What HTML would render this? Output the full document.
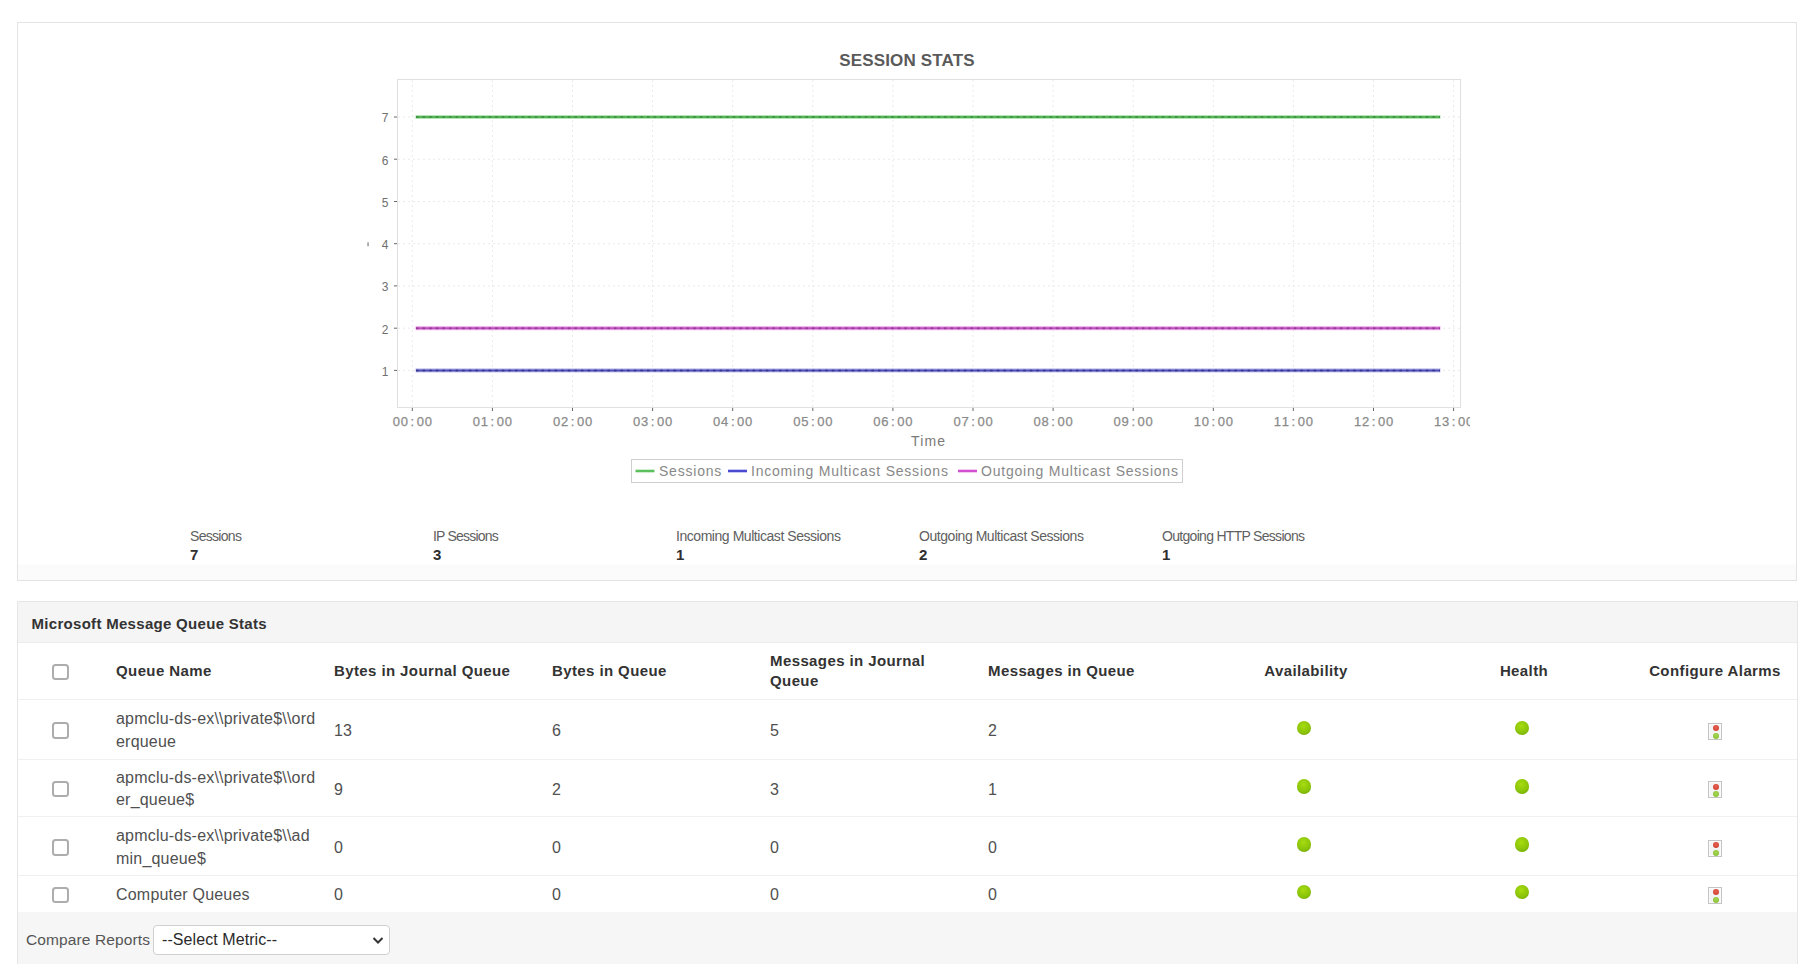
<!DOCTYPE html>
<html><head><meta charset="utf-8">
<style>
*{box-sizing:border-box;margin:0;padding:0}
html,body{width:1812px;height:975px;background:#fff;overflow:hidden;font-family:"Liberation Sans",sans-serif;position:relative}
.abs{position:absolute}
#p1{left:17px;top:22px;width:1780px;height:559px;border:1px solid #e3e3e3;background:linear-gradient(#fff 541px,#fbfbfb 542px)}
#chart{position:absolute;left:0;top:0}
.st{position:absolute;top:526.5px;font-size:14px;color:#606060;letter-spacing:-0.45px;line-height:18px}
.st b{display:block;font-size:15px;color:#2e2e2e;letter-spacing:0;margin-top:1.5px}
#p2{left:17px;top:601px;width:1781px;height:363px;border:1px solid #e6e6e6;background:#fff}
#p2h{position:absolute;left:0;top:0;width:100%;height:41px;background:#f5f5f5;border-bottom:1px solid #ececec}
#p2h span{position:absolute;left:13.5px;top:13px;font-size:15px;font-weight:bold;color:#333;letter-spacing:0.3px;line-height:17px}
.cb{position:absolute;width:16.4px;height:16.4px;border:2px solid #adadad;border-radius:3.5px;background:#fff}
.th{position:absolute;font-size:15px;font-weight:bold;color:#333;line-height:20px;letter-spacing:0.4px}
.td{position:absolute;font-size:16px;color:#505050;line-height:22.5px;letter-spacing:0.2px}
.sep{position:absolute;left:0;width:100%;height:1px;background:#f0f0f0}
.dot{position:absolute;width:14.4px;height:14.4px;border-radius:50%;background:radial-gradient(circle at 45% 35%,#a6dc10 0%,#8cc50a 55%,#6aa000 100%)}
.ico{position:absolute;width:14px;height:17px;border:1px solid #c4c4c4;background:#f3f3f3;box-shadow:inset 0 0 0 1px #fafafa}
.ico:before,.ico:after{content:"";position:absolute;left:3.5px;width:6px;height:6px;border-radius:50%}
.ico:before{top:1.6px;background:radial-gradient(circle at 50% 40%,#e86050,#c8392b)}
.ico:after{top:8.9px;width:6.2px;height:6.2px;left:3.4px;background:radial-gradient(circle at 50% 40%,#a8d850,#7cb82e)}
#foot{position:absolute;left:0;top:310px;width:100%;height:52px;background:#f6f6f6}
#foot span{position:absolute;left:8px;top:19px;font-size:15.5px;color:#555;letter-spacing:0.12px}
#sel{position:absolute;left:135px;top:13px;width:237px;height:30px;border:1px solid #d0d0d0;border-radius:4px;background:#fff;font-size:16px;color:#222}
#sel span{position:absolute;left:8px;top:5px;font-size:16px;color:#2a2a2a;letter-spacing:0.08px}
#sel svg{position:absolute;left:217.5px;top:10px}
</style></head><body>
<div id="p1" class="abs"></div>
<svg id="chart" width="1812" height="500" viewBox="0 0 1812 500">
<defs><clipPath id="cl"><rect x="0" y="0" width="1470" height="500"/></clipPath></defs>
<text x="907" y="66" text-anchor="middle" font-family="Liberation Sans" font-weight="bold" font-size="17" fill="#5a5a5a" letter-spacing="0.15">SESSION STATS</text>
<line x1="412.3" y1="80" x2="412.3" y2="407" stroke="#eaeaea" stroke-width="1" stroke-dasharray="2,3"/>
<line x1="492.4" y1="80" x2="492.4" y2="407" stroke="#eaeaea" stroke-width="1" stroke-dasharray="2,3"/>
<line x1="572.5" y1="80" x2="572.5" y2="407" stroke="#eaeaea" stroke-width="1" stroke-dasharray="2,3"/>
<line x1="652.6" y1="80" x2="652.6" y2="407" stroke="#eaeaea" stroke-width="1" stroke-dasharray="2,3"/>
<line x1="732.7" y1="80" x2="732.7" y2="407" stroke="#eaeaea" stroke-width="1" stroke-dasharray="2,3"/>
<line x1="812.8" y1="80" x2="812.8" y2="407" stroke="#eaeaea" stroke-width="1" stroke-dasharray="2,3"/>
<line x1="892.9" y1="80" x2="892.9" y2="407" stroke="#eaeaea" stroke-width="1" stroke-dasharray="2,3"/>
<line x1="973.0" y1="80" x2="973.0" y2="407" stroke="#eaeaea" stroke-width="1" stroke-dasharray="2,3"/>
<line x1="1053.1" y1="80" x2="1053.1" y2="407" stroke="#eaeaea" stroke-width="1" stroke-dasharray="2,3"/>
<line x1="1133.2" y1="80" x2="1133.2" y2="407" stroke="#eaeaea" stroke-width="1" stroke-dasharray="2,3"/>
<line x1="1213.3" y1="80" x2="1213.3" y2="407" stroke="#eaeaea" stroke-width="1" stroke-dasharray="2,3"/>
<line x1="1293.4" y1="80" x2="1293.4" y2="407" stroke="#eaeaea" stroke-width="1" stroke-dasharray="2,3"/>
<line x1="1373.5" y1="80" x2="1373.5" y2="407" stroke="#eaeaea" stroke-width="1" stroke-dasharray="2,3"/>
<line x1="1453.6" y1="80" x2="1453.6" y2="407" stroke="#eaeaea" stroke-width="1" stroke-dasharray="2,3"/>
<line x1="398" y1="117.0" x2="1460" y2="117.0" stroke="#eaeaea" stroke-width="1" stroke-dasharray="2,3"/>
<line x1="398" y1="159.2" x2="1460" y2="159.2" stroke="#eaeaea" stroke-width="1" stroke-dasharray="2,3"/>
<line x1="398" y1="201.5" x2="1460" y2="201.5" stroke="#eaeaea" stroke-width="1" stroke-dasharray="2,3"/>
<line x1="398" y1="243.7" x2="1460" y2="243.7" stroke="#eaeaea" stroke-width="1" stroke-dasharray="2,3"/>
<line x1="398" y1="285.9" x2="1460" y2="285.9" stroke="#eaeaea" stroke-width="1" stroke-dasharray="2,3"/>
<line x1="398" y1="328.2" x2="1460" y2="328.2" stroke="#eaeaea" stroke-width="1" stroke-dasharray="2,3"/>
<line x1="398" y1="370.4" x2="1460" y2="370.4" stroke="#eaeaea" stroke-width="1" stroke-dasharray="2,3"/>
<rect x="397.5" y="79.5" width="1063" height="328" fill="none" stroke="#e0e0e0" stroke-width="1"/>
<line x1="394" y1="117.0" x2="397" y2="117.0" stroke="#666" stroke-width="1"/>
<text x="388.5" y="122.3" text-anchor="end" font-family="Liberation Sans" font-size="12" fill="#707070">7</text>
<line x1="394" y1="159.2" x2="397" y2="159.2" stroke="#666" stroke-width="1"/>
<text x="388.5" y="164.5" text-anchor="end" font-family="Liberation Sans" font-size="12" fill="#707070">6</text>
<line x1="394" y1="201.5" x2="397" y2="201.5" stroke="#666" stroke-width="1"/>
<text x="388.5" y="206.8" text-anchor="end" font-family="Liberation Sans" font-size="12" fill="#707070">5</text>
<line x1="394" y1="243.7" x2="397" y2="243.7" stroke="#666" stroke-width="1"/>
<text x="388.5" y="249.0" text-anchor="end" font-family="Liberation Sans" font-size="12" fill="#707070">4</text>
<line x1="394" y1="285.9" x2="397" y2="285.9" stroke="#666" stroke-width="1"/>
<text x="388.5" y="291.2" text-anchor="end" font-family="Liberation Sans" font-size="12" fill="#707070">3</text>
<line x1="394" y1="328.2" x2="397" y2="328.2" stroke="#666" stroke-width="1"/>
<text x="388.5" y="333.5" text-anchor="end" font-family="Liberation Sans" font-size="12" fill="#707070">2</text>
<line x1="394" y1="370.4" x2="397" y2="370.4" stroke="#666" stroke-width="1"/>
<text x="388.5" y="375.7" text-anchor="end" font-family="Liberation Sans" font-size="12" fill="#707070">1</text>
<line x1="412.3" y1="408" x2="412.3" y2="411" stroke="#666" stroke-width="1"/>
<text x="396.3 404.3 412.3 420.3 428.3" y="426.3" text-anchor="middle" font-family="Liberation Sans" font-size="13" fill="#8a8a8a" stroke="#8a8a8a" stroke-width="0.25" clip-path="url(#cl)">00:00</text>
<line x1="492.4" y1="408" x2="492.4" y2="411" stroke="#666" stroke-width="1"/>
<text x="476.4 484.4 492.4 500.4 508.4" y="426.3" text-anchor="middle" font-family="Liberation Sans" font-size="13" fill="#8a8a8a" stroke="#8a8a8a" stroke-width="0.25" clip-path="url(#cl)">01:00</text>
<line x1="572.5" y1="408" x2="572.5" y2="411" stroke="#666" stroke-width="1"/>
<text x="556.5 564.5 572.5 580.5 588.5" y="426.3" text-anchor="middle" font-family="Liberation Sans" font-size="13" fill="#8a8a8a" stroke="#8a8a8a" stroke-width="0.25" clip-path="url(#cl)">02:00</text>
<line x1="652.6" y1="408" x2="652.6" y2="411" stroke="#666" stroke-width="1"/>
<text x="636.6 644.6 652.6 660.6 668.6" y="426.3" text-anchor="middle" font-family="Liberation Sans" font-size="13" fill="#8a8a8a" stroke="#8a8a8a" stroke-width="0.25" clip-path="url(#cl)">03:00</text>
<line x1="732.7" y1="408" x2="732.7" y2="411" stroke="#666" stroke-width="1"/>
<text x="716.7 724.7 732.7 740.7 748.7" y="426.3" text-anchor="middle" font-family="Liberation Sans" font-size="13" fill="#8a8a8a" stroke="#8a8a8a" stroke-width="0.25" clip-path="url(#cl)">04:00</text>
<line x1="812.8" y1="408" x2="812.8" y2="411" stroke="#666" stroke-width="1"/>
<text x="796.8 804.8 812.8 820.8 828.8" y="426.3" text-anchor="middle" font-family="Liberation Sans" font-size="13" fill="#8a8a8a" stroke="#8a8a8a" stroke-width="0.25" clip-path="url(#cl)">05:00</text>
<line x1="892.9" y1="408" x2="892.9" y2="411" stroke="#666" stroke-width="1"/>
<text x="876.9 884.9 892.9 900.9 908.9" y="426.3" text-anchor="middle" font-family="Liberation Sans" font-size="13" fill="#8a8a8a" stroke="#8a8a8a" stroke-width="0.25" clip-path="url(#cl)">06:00</text>
<line x1="973.0" y1="408" x2="973.0" y2="411" stroke="#666" stroke-width="1"/>
<text x="957.0 965.0 973.0 981.0 989.0" y="426.3" text-anchor="middle" font-family="Liberation Sans" font-size="13" fill="#8a8a8a" stroke="#8a8a8a" stroke-width="0.25" clip-path="url(#cl)">07:00</text>
<line x1="1053.1" y1="408" x2="1053.1" y2="411" stroke="#666" stroke-width="1"/>
<text x="1037.1 1045.1 1053.1 1061.1 1069.1" y="426.3" text-anchor="middle" font-family="Liberation Sans" font-size="13" fill="#8a8a8a" stroke="#8a8a8a" stroke-width="0.25" clip-path="url(#cl)">08:00</text>
<line x1="1133.2" y1="408" x2="1133.2" y2="411" stroke="#666" stroke-width="1"/>
<text x="1117.2 1125.2 1133.2 1141.2 1149.2" y="426.3" text-anchor="middle" font-family="Liberation Sans" font-size="13" fill="#8a8a8a" stroke="#8a8a8a" stroke-width="0.25" clip-path="url(#cl)">09:00</text>
<line x1="1213.3" y1="408" x2="1213.3" y2="411" stroke="#666" stroke-width="1"/>
<text x="1197.3 1205.3 1213.3 1221.3 1229.3" y="426.3" text-anchor="middle" font-family="Liberation Sans" font-size="13" fill="#8a8a8a" stroke="#8a8a8a" stroke-width="0.25" clip-path="url(#cl)">10:00</text>
<line x1="1293.4" y1="408" x2="1293.4" y2="411" stroke="#666" stroke-width="1"/>
<text x="1277.4 1285.4 1293.4 1301.4 1309.4" y="426.3" text-anchor="middle" font-family="Liberation Sans" font-size="13" fill="#8a8a8a" stroke="#8a8a8a" stroke-width="0.25" clip-path="url(#cl)">11:00</text>
<line x1="1373.5" y1="408" x2="1373.5" y2="411" stroke="#666" stroke-width="1"/>
<text x="1357.5 1365.5 1373.5 1381.5 1389.5" y="426.3" text-anchor="middle" font-family="Liberation Sans" font-size="13" fill="#8a8a8a" stroke="#8a8a8a" stroke-width="0.25" clip-path="url(#cl)">12:00</text>
<line x1="1453.6" y1="408" x2="1453.6" y2="411" stroke="#666" stroke-width="1"/>
<text x="1437.6 1445.6 1453.6 1461.6 1469.6" y="426.3" text-anchor="middle" font-family="Liberation Sans" font-size="13" fill="#8a8a8a" stroke="#8a8a8a" stroke-width="0.25" clip-path="url(#cl)">13:00</text>
<text x="928.6" y="446" text-anchor="middle" font-family="Liberation Sans" font-size="14" fill="#7a7a7a" letter-spacing="1.1">Time</text>
<rect x="367.3" y="242.3" width="1.5" height="4" fill="#999"/>
<line x1="415.5" y1="117.0" x2="1440.5" y2="117.0" stroke="#b4e6b4" stroke-width="4.2"/>
<line x1="416" y1="117.0" x2="1440" y2="117.0" stroke="#56b456" stroke-width="2"/>
<line x1="416" y1="117.0" x2="1440" y2="117.0" stroke="#357f40" stroke-width="2" stroke-dasharray="2.5,4.1" opacity="0.6"/>
<line x1="415.5" y1="328.2" x2="1440.5" y2="328.2" stroke="#f2b4f2" stroke-width="4.2"/>
<line x1="416" y1="328.2" x2="1440" y2="328.2" stroke="#bc50bc" stroke-width="2"/>
<line x1="416" y1="328.2" x2="1440" y2="328.2" stroke="#7a307a" stroke-width="2" stroke-dasharray="2.5,4.1" opacity="0.6"/>
<line x1="415.5" y1="370.4" x2="1440.5" y2="370.4" stroke="#c4c4f2" stroke-width="4.2"/>
<line x1="416" y1="370.4" x2="1440" y2="370.4" stroke="#4c4cb4" stroke-width="2"/>
<line x1="416" y1="370.4" x2="1440" y2="370.4" stroke="#2c2c78" stroke-width="2" stroke-dasharray="2.5,4.1" opacity="0.6"/>
<rect x="631.5" y="459.5" width="551" height="23" fill="#fff" stroke="#cfcfcf" stroke-width="1"/>
<line x1="635.5" y1="471" x2="654.5" y2="471" stroke="#5cc15c" stroke-width="2.6"/>
<text x="659" y="476" font-family="Liberation Sans" font-size="14" fill="#888" letter-spacing="0.78">Sessions</text>
<line x1="728" y1="471" x2="747" y2="471" stroke="#4a4ad0" stroke-width="2.6"/>
<text x="751" y="476" font-family="Liberation Sans" font-size="14" fill="#888" letter-spacing="0.78">Incoming Multicast Sessions</text>
<line x1="958" y1="471" x2="977" y2="471" stroke="#d24fd2" stroke-width="2.6"/>
<text x="981" y="476" font-family="Liberation Sans" font-size="14" fill="#888" letter-spacing="0.78">Outgoing Multicast Sessions</text>
</svg>
<div class="st" style="left:190px;letter-spacing:-0.7px">Sessions<b>7</b></div>
<div class="st" style="left:433px;letter-spacing:-0.8px">IP Sessions<b>3</b></div>
<div class="st" style="left:676px">Incoming Multicast Sessions<b>1</b></div>
<div class="st" style="left:919px">Outgoing Multicast Sessions<b>2</b></div>
<div class="st" style="left:1162px;letter-spacing:-0.7px">Outgoing HTTP Sessions<b>1</b></div>
<div id="p2" class="abs">
<div id="p2h"><span>Microsoft Message Queue Stats</span></div>
<div class="cb" style="left:34.3px;top:61.89999999999998px"></div>
<div class="th" style="left:98px;top:59px">Queue Name</div>
<div class="th" style="left:316px;top:59px">Bytes in Journal Queue</div>
<div class="th" style="left:534px;top:59px">Bytes in Queue</div>
<div class="th" style="left:752px;top:49px">Messages in Journal<br>Queue</div>
<div class="th" style="left:970px;top:59px">Messages in Queue</div>
<div class="th" style="left:1179px;top:59px;width:218px;text-align:center">Availability</div>
<div class="th" style="left:1397px;top:59px;width:218px;text-align:center">Health</div>
<div class="th" style="left:1588px;top:59px;width:218px;text-align:center">Configure Alarms</div>
<div class="sep" style="top:97px"></div>
<div class="cb" style="left:34.4px;top:120.34999999999991px"></div>
<div class="td" style="left:98px;top:106.14999999999998px">apmclu-ds-ex\\private$\\ord<br>erqueue</div>
<div class="td" style="left:316px;top:118.14999999999998px">13</div>
<div class="td" style="left:534px;top:118.14999999999998px">6</div>
<div class="td" style="left:752px;top:118.14999999999998px">5</div>
<div class="td" style="left:970px;top:118.14999999999998px">2</div>
<div class="dot" style="left:1279.1px;top:118.54999999999995px"></div>
<div class="dot" style="left:1497.1px;top:118.54999999999995px"></div>
<div class="ico" style="left:1690.3px;top:120.75px"></div>
<div class="sep" style="top:157px"></div>
<div class="cb" style="left:34.4px;top:178.9999999999999px"></div>
<div class="td" style="left:98px;top:164.79999999999995px">apmclu-ds-ex\\private$\\ord<br>er_queue$</div>
<div class="td" style="left:316px;top:176.79999999999995px">9</div>
<div class="td" style="left:534px;top:176.79999999999995px">2</div>
<div class="td" style="left:752px;top:176.79999999999995px">3</div>
<div class="td" style="left:970px;top:176.79999999999995px">1</div>
<div class="dot" style="left:1279.1px;top:177.19999999999993px"></div>
<div class="dot" style="left:1497.1px;top:177.19999999999993px"></div>
<div class="ico" style="left:1690.3px;top:179.39999999999998px"></div>
<div class="sep" style="top:214px"></div>
<div class="cb" style="left:34.4px;top:237.2499999999999px"></div>
<div class="td" style="left:98px;top:223.04999999999995px">apmclu-ds-ex\\private$\\ad<br>min_queue$</div>
<div class="td" style="left:316px;top:235.04999999999995px">0</div>
<div class="td" style="left:534px;top:235.04999999999995px">0</div>
<div class="td" style="left:752px;top:235.04999999999995px">0</div>
<div class="td" style="left:970px;top:235.04999999999995px">0</div>
<div class="dot" style="left:1279.1px;top:235.44999999999993px"></div>
<div class="dot" style="left:1497.1px;top:235.44999999999993px"></div>
<div class="ico" style="left:1690.3px;top:237.64999999999998px"></div>
<div class="sep" style="top:273px"></div>
<div class="cb" style="left:34.4px;top:284.4999999999999px"></div>
<div class="td" style="left:98px;top:282.29999999999995px">Computer Queues</div>
<div class="td" style="left:316px;top:282.29999999999995px">0</div>
<div class="td" style="left:534px;top:282.29999999999995px">0</div>
<div class="td" style="left:752px;top:282.29999999999995px">0</div>
<div class="td" style="left:970px;top:282.29999999999995px">0</div>
<div class="dot" style="left:1279.1px;top:282.69999999999993px"></div>
<div class="dot" style="left:1497.1px;top:282.69999999999993px"></div>
<div class="ico" style="left:1690.3px;top:284.9px"></div>
<div id="foot"><span>Compare Reports</span><div id="sel"><span>--Select Metric--</span><svg width="12" height="9" viewBox="0 0 12 9"><path d="M1.5 2 L6 6.5 L10.5 2" fill="none" stroke="#333" stroke-width="2"/></svg></div></div>
</div>
</body></html>
